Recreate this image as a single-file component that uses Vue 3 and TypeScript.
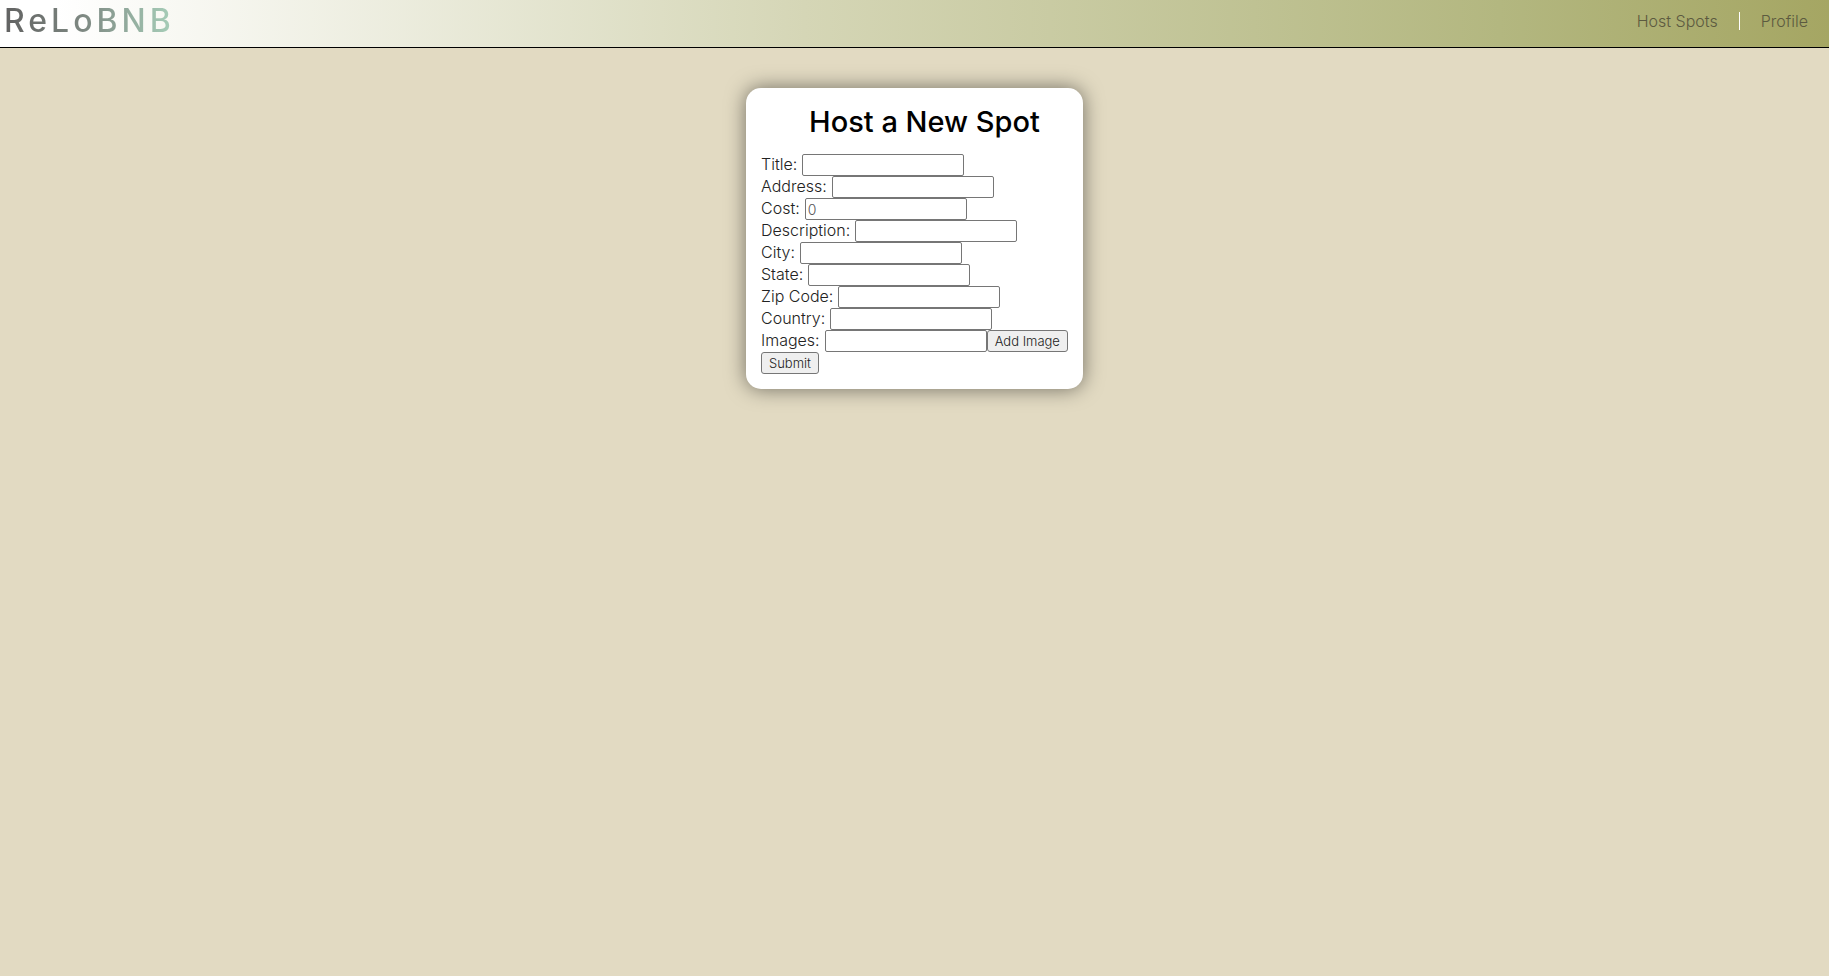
<script setup lang="ts">
import { reactive, ref } from 'vue'

interface Field {
  key: string
  label: string
  placeholder?: string
}

const fields: Field[] = [
  { key: 'title', label: 'Title:' },
  { key: 'address', label: 'Address:' },
  { key: 'cost', label: 'Cost:', placeholder: '0' },
  { key: 'description', label: 'Description:' },
  { key: 'city', label: 'City:' },
  { key: 'state', label: 'State:' },
  { key: 'zip', label: 'Zip Code:' },
  { key: 'country', label: 'Country:' },
]

const spot = reactive<Record<string, string>>({})
const imageUrl = ref('')
const images = ref<string[]>([])

function addImage() {
  if (!imageUrl.value) return
  images.value.push(imageUrl.value)
  imageUrl.value = ''
}
</script>

<template>
  <header class="navbar">
    <a class="logo" href="#home">ReLoBNB</a>
    <nav class="links">
      <a href="#host">Host Spots</a>
      <span class="divider"></span>
      <a href="#profile">Profile</a>
    </nav>
  </header>
  <main class="content">
    <form class="card" @submit.prevent>
      <h1>Host a New Spot</h1>
      <div v-for="field in fields" :key="field.key" class="row">
        <label :for="field.key">{{ field.label }}</label>
        <input :id="field.key" v-model="spot[field.key]" type="text" :placeholder="field.placeholder" />
      </div>
      <div class="row">
        <label for="images">Images:</label>
        <input id="images" v-model="imageUrl" type="text" />
        <button type="button" @click="addImage">Add Image</button>
      </div>
      <div class="row">
        <button type="submit">Submit</button>
      </div>
    </form>
  </main>
</template>

<style>
body {
  background: #e2dac2;
}
</style>

<style scoped>
.navbar,
.content,
.card input,
.card button {
  font-family: Inter, 'Liberation Sans', sans-serif;
  font-weight: 300;
}

.navbar {
  display: flex;
  align-items: center;
  justify-content: space-between;
  box-sizing: border-box;
  height: 48px;
  padding: 0 21px 5px 4px;
  border-bottom: 1px solid #000;
  background: linear-gradient(90deg, #fff 0%, #fff 3%, #d5d6b6 44%, #b3b780 82%, #a5a663 100%);
}

.logo {
  font-size: 32px;
  font-weight: 500;
  line-height: 40px;
  letter-spacing: 4px;
  text-decoration: none;
  color: transparent;
  background: linear-gradient(90deg, #626262 0%, #7d8781 45%, #a8d0ba 100%);
  background-clip: text;
}

.links {
  display: flex;
  align-items: center;
  gap: 21px;
  font-size: 16px;
}

.links a {
  color: #5c5a40;
  text-decoration: none;
}

.divider {
  width: 1px;
  height: 18px;
  background: #fff;
}

.content {
  display: flex;
  justify-content: center;
  padding: 40px 16px;
}

.card {
  box-sizing: border-box;
  min-width: 337px;
  padding: 15px;
  border-radius: 15px;
  background: #fff;
  box-shadow: 0 0 20px rgba(0, 0, 0, 0.5);
}

h1 {
  margin: 0 0 14px;
  padding-left: 20px;
  font-size: 29px;
  font-weight: 500;
  line-height: 37px;
  text-align: center;
}

.row {
  display: flex;
  height: 22px;
  font-size: 16px;
  line-height: 20px;
}

label {
  margin-right: 5px;
  color: #222;
}

.card input {
  box-sizing: border-box;
  width: 162px;
  height: 22px;
  padding: 1px 2px;
  border: 1px solid #767676;
  border-radius: 2px;
  background: #fff;
  font-size: 14px;
}

.card input::placeholder {
  color: #555;
}

.card button {
  box-sizing: border-box;
  height: 22px;
  padding: 0 7px;
  border: 1px solid #767676;
  border-radius: 3px;
  background: #efefef;
  color: #222;
  font-size: 13px;
  line-height: 20px;
}
</style>
